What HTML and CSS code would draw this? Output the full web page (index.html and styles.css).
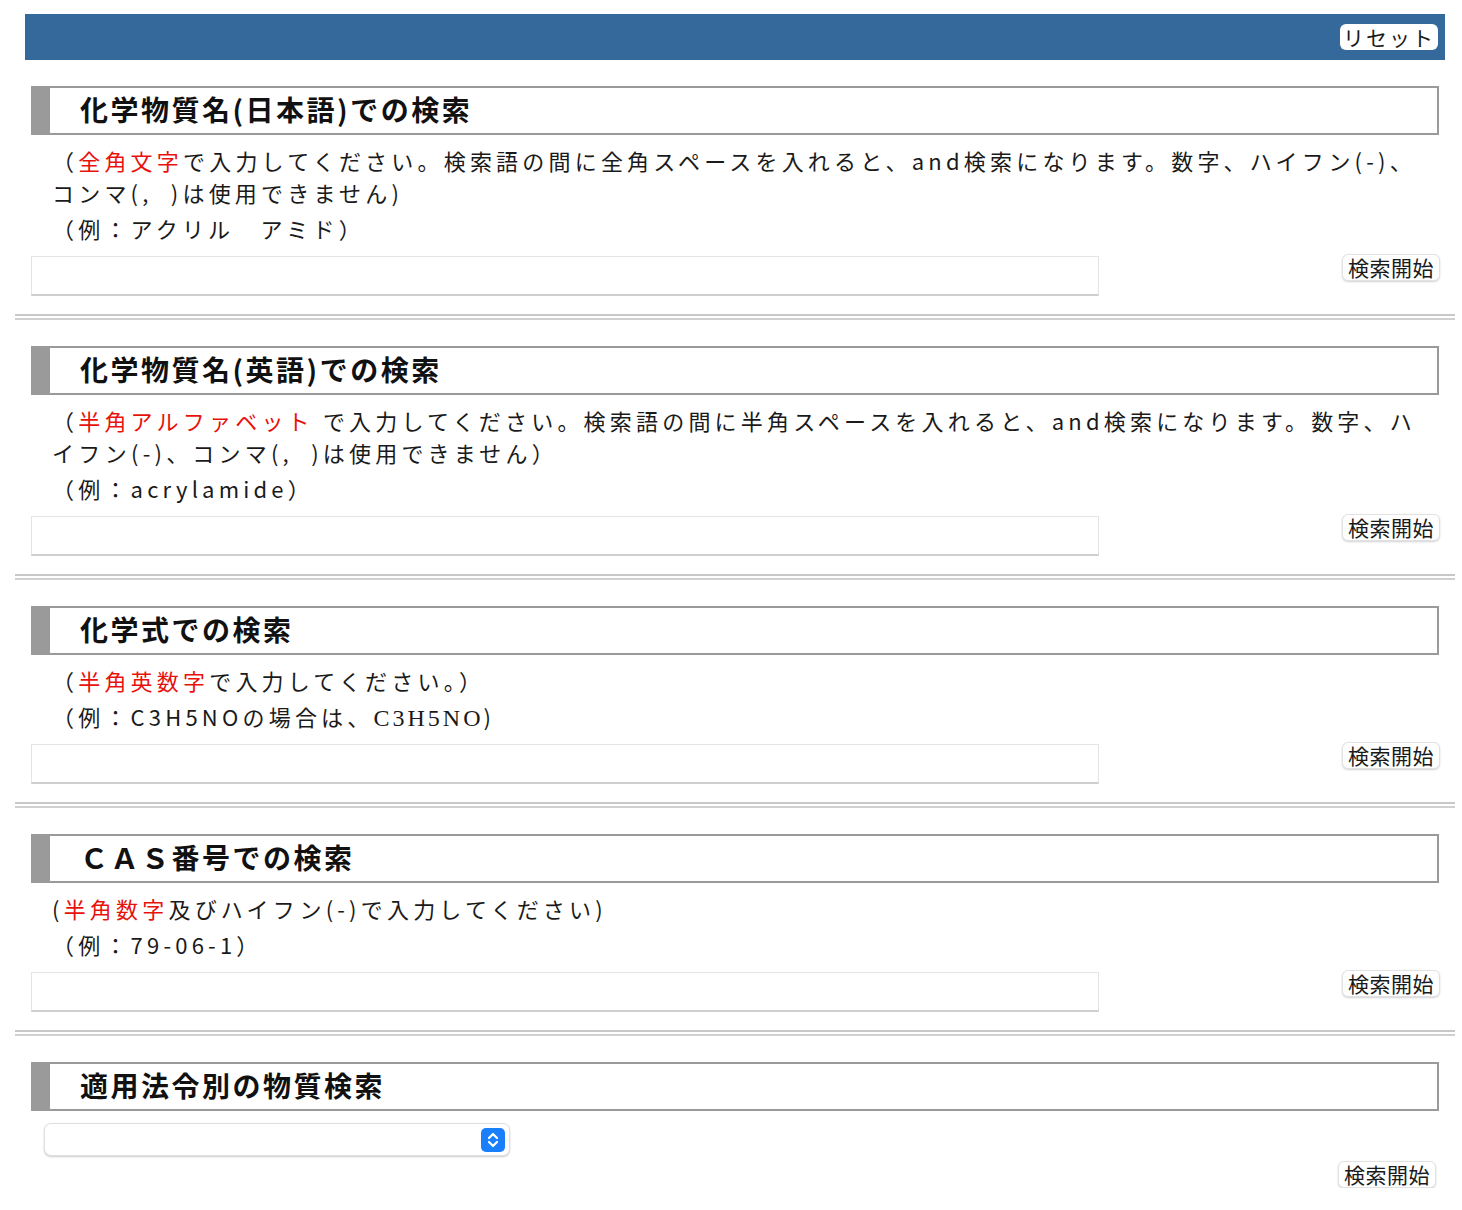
FILE: index.html
```html
<!DOCTYPE html>
<html lang="ja">
<head>
<meta charset="utf-8">
<title>検索</title>
<link rel="stylesheet" href="styles.css">
</head>
<body>
<div class="topbar"><button class="reset">リセット</button></div>
<div class="main">
  <section class="sec">
    <h2 class="head">化学物質名(日本語)での検索</h2>
    <p class="desc">（<span class="red">全角文字</span>で入力してください。検索語の間に全角スペースを入れると、and検索になります。数字、ハイフン(-)、<br>コンマ(,&nbsp;&nbsp;)は使用できません)</p>
    <p class="ex">（例：アクリル　アミド）</p>
    <div class="row"><input class="field" type="text"><button class="go">検索開始</button></div>
  </section>
  <hr class="sep">
  <section class="sec">
    <h2 class="head">化学物質名(英語)での検索</h2>
    <p class="desc">（<span class="red">半角アルファベット</span> で入力してください。検索語の間に半角スペースを入れると、and検索になります。数字、ハ<br>イフン(-)、コンマ(,&nbsp;&nbsp;)は使用できません）</p>
    <p class="ex">（例：acrylamide）</p>
    <div class="row"><input class="field" type="text"><button class="go">検索開始</button></div>
  </section>
  <hr class="sep">
  <section class="sec">
    <h2 class="head">化学式での検索</h2>
    <p class="desc">（<span class="red">半角英数字</span>で入力してください。）</p>
    <p class="ex">（例：C3H5NOの場合は、<span class="serif">C3H5NO</span>)</p>
    <div class="row"><input class="field" type="text"><button class="go">検索開始</button></div>
  </section>
  <hr class="sep">
  <section class="sec">
    <h2 class="head">ＣＡＳ番号での検索</h2>
    <p class="desc">(<span class="red">半角数字</span>及びハイフン(-)で入力してください)</p>
    <p class="ex">（例：79-06-1）</p>
    <div class="row"><input class="field" type="text"><button class="go">検索開始</button></div>
  </section>
  <hr class="sep">
  <section class="sec">
    <h2 class="head">適用法令別の物質検索</h2>
    <div class="select">
      <span class="chev"><svg width="14" height="18" viewBox="0 0 14 18"><path d="M3 7 L7 3 L11 7 M3 11 L7 15 L11 11" fill="none" stroke="#fff" stroke-width="2.2" stroke-linecap="round" stroke-linejoin="round"/></svg></span>
    </div>
    <div class="row2"><button class="go">検索開始</button></div>
  </section>
</div>
</body>
</html>
```
FILE: styles.css
```css
html, body {
  margin: 0;
  padding: 0;
  background: #fff;
}
body {
  font-family: "Noto Sans CJK JP", "Noto Sans", sans-serif;
  color: #1a1a1a;
}
.topbar {
  margin: 14px 17px 0 25px;
  height: 46px;
  background: #35699b;
  display: flex;
  justify-content: flex-end;
  align-items: center;
  padding-right: 7px;
}
.reset {
  font-family: inherit;
  font-size: 21px;
  letter-spacing: 2px;
  line-height: 24px;
  height: 26px;
  width: 98px;
  padding: 0;
  background: #fff;
  color: #1a1a1a;
  border: none;
  border-radius: 6px;
}
.main {
  width: 1440px;
  margin-left: 15px;
  padding-top: 26px;
}
.sec {
  padding: 0 16px;
}
.head {
  margin: 0;
  height: 45px;
  border: 2px solid #9a9a9a;
  border-left: 19px solid #9a9a9a;
  padding-left: 30px;
  font-size: 28px;
  font-weight: bold;
  letter-spacing: 2.5px;
  line-height: 43px;
  color: #111;
}
.desc {
  margin: 9px 0 0;
  padding-left: 21px;
  font-size: 22px;
  letter-spacing: 4.2px;
  line-height: 32px;
  white-space: nowrap;
}
.ex {
  margin: 4px 0 0;
  padding-left: 21px;
  font-size: 22px;
  letter-spacing: 4.2px;
  line-height: 32px;
}
.red {
  color: #e8120c;
}
.serif {
  font-family: "Liberation Serif", serif;
  font-size: 24px;
  line-height: 1;
  letter-spacing: 3px;
}
.row {
  margin-top: 12px;
  display: flex;
  justify-content: space-between;
  align-items: flex-start;
  margin-right: -1px;
}
.field {
  width: 1068px;
  height: 40px;
  box-sizing: border-box;
  border: 1px solid #e4e4e4;
  border-bottom: 2px solid #cfcfcf;
  margin: 0;
  background: #fff;
}
.go {
  margin-top: -2px;
  width: 98px;
  height: 27px;
  padding: 0;
  font-family: inherit;
  font-size: 21px;
  letter-spacing: 0.5px;
  line-height: 25px;
  color: #1a1a1a;
  background: #fff;
  border: 1px solid #e2e2e2;
  border-radius: 6px;
  box-shadow: 0 1px 2px rgba(0,0,0,0.18);
}
.sep {
  margin: 18px 0 26px;
  height: 2px;
  border: none;
  border-top: 2px solid #c8c8c8;
  border-bottom: 2px solid #d0d0d0;
  background: #fff;
}
.select {
  margin: 12px 0 0 13px;
  width: 466px;
  height: 33px;
  box-sizing: border-box;
  border: 1px solid #e0e0e0;
  border-radius: 7px;
  box-shadow: 0 1px 2px rgba(0,0,0,0.2);
  display: flex;
  justify-content: flex-end;
  align-items: center;
  padding-right: 4px;
  background: #fff;
}
.chev {
  width: 24px;
  height: 24px;
  border-radius: 5px;
  background: #1a7ffb;
  display: flex;
  align-items: center;
  justify-content: center;
}
.row2 {
  display: flex;
  justify-content: flex-end;
  margin-top: 7px;
  padding-right: 3px;
}
```
